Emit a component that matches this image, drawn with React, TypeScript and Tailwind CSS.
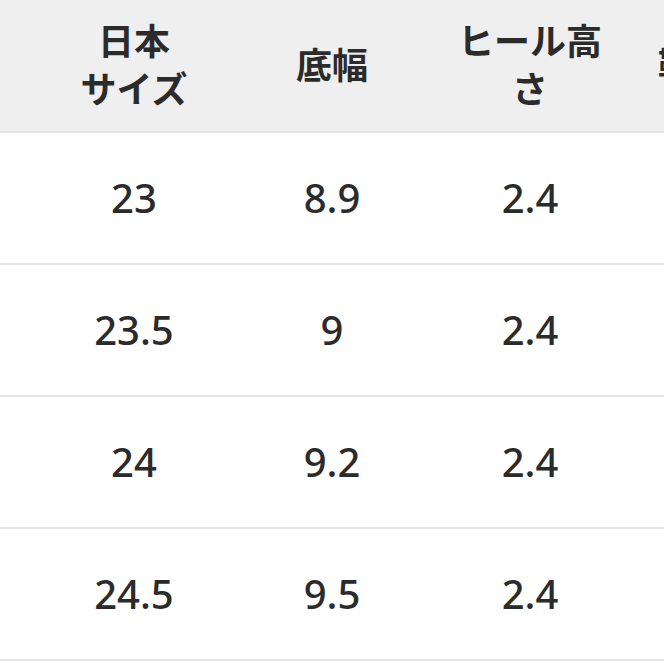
const headers: React.ReactNode[] = [
  <>
    日本
    <br />
    サイズ
  </>,
  "底幅",
  "ヒール高さ",
  "靴の全長",
];

const rows = [
  ["23", "8.9", "2.4", "23.5"],
  ["23.5", "9", "2.4", "24"],
  ["24", "9.2", "2.4", "24.5"],
  ["24.5", "9.5", "2.4", "25"],
];

export default function App() {
  return (
    <div
      className="w-[664px] h-[664px] overflow-hidden bg-white text-[#2b2b2b]"
      style={{ fontFamily: '"Noto Sans", "Noto Sans CJK JP", sans-serif' }}
    >
      {/* header */}
      <div className="flex h-[133px] bg-[#efefef] border-b-2 border-[#e3e3e3] pl-[35px]">
        {headers.map((h, i) => (
          <div
            key={i}
            className={`w-[198px] shrink-0 flex items-center text-center text-[36px] leading-[48px] font-bold ${
              i === 3 ? "justify-start pl-[29px] whitespace-nowrap" : "justify-center px-5"
            }`}
          >
            <div>{h}</div>
          </div>
        ))}
      </div>

      {/* body */}
      {rows.map((r, i) => (
        <div key={i} className="flex h-[132px] border-b-2 border-[#e3e3e3] pl-[35px]">
          {r.map((v, j) => (
            <div
              key={j}
              className="w-[198px] shrink-0 flex items-center justify-center text-[40px] font-medium"
            >
              {v}
            </div>
          ))}
        </div>
      ))}
    </div>
  );
}
